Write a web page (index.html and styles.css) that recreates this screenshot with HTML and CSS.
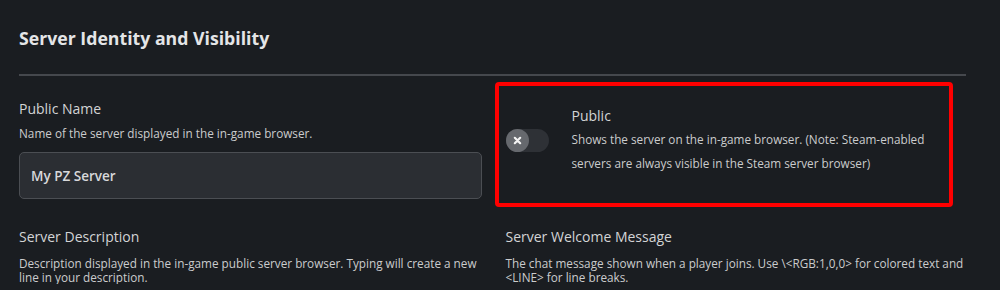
FILE: index.html
```html
<!DOCTYPE html>
<html lang="en">
<head>
  <meta charset="UTF-8">
  <title>Server Settings</title>
  <link rel="stylesheet" href="styles.css">
</head>
<body>
  <div class="panel">
    <h2 class="title">Server Identity and Visibility</h2>
    <div class="divider"></div>

    <div class="grid">
      <div class="field first">
        <div class="label">Public Name</div>
        <div class="desc">Name of the server displayed in the in-game browser.</div>
        <div class="input">My PZ Server</div>
      </div>

      <div class="toggle-box">
        <div class="toggle">
          <span class="knob">
            <svg width="9" height="9" viewBox="0 0 10 10"><path d="M2 2 L8 8 M8 2 L2 8" stroke="#f4f4f4" stroke-width="2.4" stroke-linecap="round"/></svg>
          </span>
        </div>
        <div class="toggle-text">
          <div class="label">Public</div>
          <div class="desc tall">Shows the server on the in-game browser. (Note: Steam-enabled servers are always visible in the Steam server browser)</div>
        </div>
      </div>

      <div class="field">
        <div class="label">Server Description</div>
        <div class="desc">Description displayed in the in-game public server browser. Typing will create a new line in your description.</div>
      </div>

      <div class="field">
        <div class="label">Server Welcome Message</div>
        <div class="desc">The chat message shown when a player joins. Use \&lt;RGB:1,0,0&gt; for colored text and &lt;LINE&gt; for line breaks.</div>
      </div>
    </div>
  </div>
</body>
</html>
```

FILE: styles.css
```css
body { margin: 0; background: #1a1d21; color: #d6d7d9; font-family: "Open Sans", sans-serif; }
.panel { padding: 26px 32px 0 19px; }
.title { margin: 0; font-size: 17.7px; font-weight: 700; line-height: 25px; color: #e4e5e7; }
.divider { height: 2px; background: #45484d; margin-top: 23px; margin-right: 2px; }

.grid { display: grid; grid-template-columns: 1fr 1fr; column-gap: 24px; row-gap: 20px; margin-top: 6px; }
.field.first { padding-top: 17px; }
.label { font-size: 14px; line-height: 20px; color: #d3d4d6; }
.desc { font-size: 11.75px; line-height: 14px; color: #cbcccd; margin-top: 7px; }
.field + .field .desc, .toggle-box + .field .desc { margin-top: 9px; }
.desc.tall { line-height: 24px; margin-top: 1px; }

.input { margin-top: 12px; height: 47px; box-sizing: border-box; border: 1px solid #4b4e53; border-radius: 5px; background: #2b2e33; padding: 0 11px; display: flex; align-items: center; font-size: 13.5px; font-weight: 600; color: #d8d9db; }

.toggle-box { display: flex; align-items: flex-start; margin-left: -11px; margin-right: 15px; border: 4px solid #ff0000; border-radius: 4px; padding: 20px 0 28px 7px; }
.toggle { margin-top: 23px; width: 43px; height: 23px; border-radius: 12px; background: #2e3136; display: flex; flex-shrink: 0; }
.knob { width: 23px; height: 23px; border-radius: 50%; background: #66696e; display: flex; align-items: center; justify-content: center; }
.toggle-text { margin-left: 23px; }
```
